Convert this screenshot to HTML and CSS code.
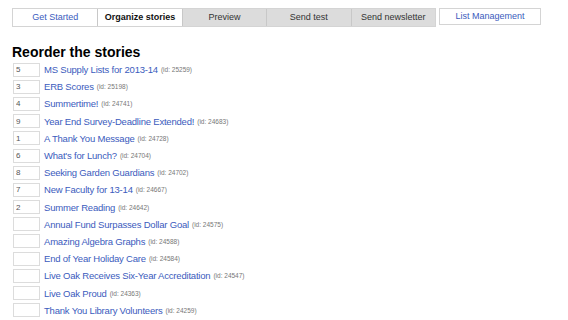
FILE: index.html
```html
<!DOCTYPE html>
<html lang="en">
<head>
<meta charset="UTF-8">
<meta name="viewport" content="width=device-width, initial-scale=1.0">
<title>Organize stories</title>
<link rel="stylesheet" href="styles.css">
</head>
<body>

<div class="tabs">
  <div class="steps">
    <a class="tab done" href="#">Get Started</a>
    <span class="tab current">Organize stories</span>
    <span class="tab todo">Preview</span>
    <span class="tab todo">Send test</span>
    <span class="tab todo">Send newsletter</span>
  </div>
  <a class="tab manage" href="#">List Management</a>
</div>

<h1>Reorder the stories</h1>

<ul class="stories">
  <li><input type="text" value="5"><a href="#">MS Supply Lists for 2013-14</a><span class="id">(id: 25259)</span></li>
  <li><input type="text" value="3"><a href="#">ERB Scores</a><span class="id">(id: 25198)</span></li>
  <li><input type="text" value="4"><a href="#">Summertime!</a><span class="id">(id: 24741)</span></li>
  <li><input type="text" value="9"><a href="#">Year End Survey-Deadline Extended!</a><span class="id">(id: 24683)</span></li>
  <li><input type="text" value="1"><a href="#">A Thank You Message</a><span class="id">(id: 24728)</span></li>
  <li><input type="text" value="6"><a href="#">What's for Lunch?</a><span class="id">(id: 24704)</span></li>
  <li><input type="text" value="8"><a href="#">Seeking Garden Guardians</a><span class="id">(id: 24702)</span></li>
  <li><input type="text" value="7"><a href="#">New Faculty for 13-14</a><span class="id">(id: 24667)</span></li>
  <li><input type="text" value="2"><a href="#">Summer Reading</a><span class="id">(id: 24642)</span></li>
  <li><input type="text" value=""><a href="#">Annual Fund Surpasses Dollar Goal</a><span class="id">(id: 24575)</span></li>
  <li><input type="text" value=""><a href="#">Amazing Algebra Graphs</a><span class="id">(id: 24588)</span></li>
  <li><input type="text" value=""><a href="#">End of Year Holiday Care</a><span class="id">(id: 24584)</span></li>
  <li><input type="text" value=""><a href="#">Live Oak Receives Six-Year Accreditation</a><span class="id">(id: 24547)</span></li>
  <li><input type="text" value=""><a href="#">Live Oak Proud</a><span class="id">(id: 24363)</span></li>
  <li><input type="text" value=""><a href="#">Thank You Library Volunteers</a><span class="id">(id: 24259)</span></li>
</ul>

</body>
</html>
```

FILE: styles.css
```css
body {
  margin: 0;
  padding: 8px 12px 0 12px;
  font-family: "Liberation Sans", Arial, sans-serif;
  background-color: #fff;
  color: #000;
}

a {
  color: #3b5bbd;
  text-decoration: none;
}

.tabs {
  display: flex;
  gap: 3px;
}

.steps {
  display: flex;
  border: 1px solid #d4d4d4;
}

.tab {
  display: block;
  box-sizing: border-box;
  width: 84.4px;
  height: 17px;
  line-height: 16px;
  text-align: center;
  font-size: 9px;
}

.tab + .tab {
  border-left: 1px solid #c8c8c8;
}

.done {
  background-color: #fff;
}

.current {
  background-color: #fff;
  font-weight: bold;
  color: #111;
}

.todo {
  background-color: #dcdcdc;
  color: #333;
}

.manage {
  width: 102px;
  border: 1px solid #d4d4d4;
  line-height: 15px;
}

h1 {
  margin: 17px 0 1px 0;
  font-size: 14px;
  font-weight: bold;
}

.stories {
  list-style: none;
  margin: 0;
  padding: 0;
}

.stories li {
  display: flex;
  align-items: center;
  height: 17.2px;
  font-size: 9.5px;
  letter-spacing: -0.2px;
  white-space: nowrap;
}

.stories input {
  box-sizing: border-box;
  width: 27px;
  height: 14px;
  margin: 0 4px 0 1px;
  padding: 0 0 0 2px;
  border: 1px solid #dcdcdc;
  font-family: "Liberation Sans", Arial, sans-serif;
  font-size: 8px;
  letter-spacing: 0;
  color: #555;
  outline: none;
}

.id {
  margin-left: 3px;
  font-size: 6.5px;
  letter-spacing: 0;
  color: #777;
}
```
